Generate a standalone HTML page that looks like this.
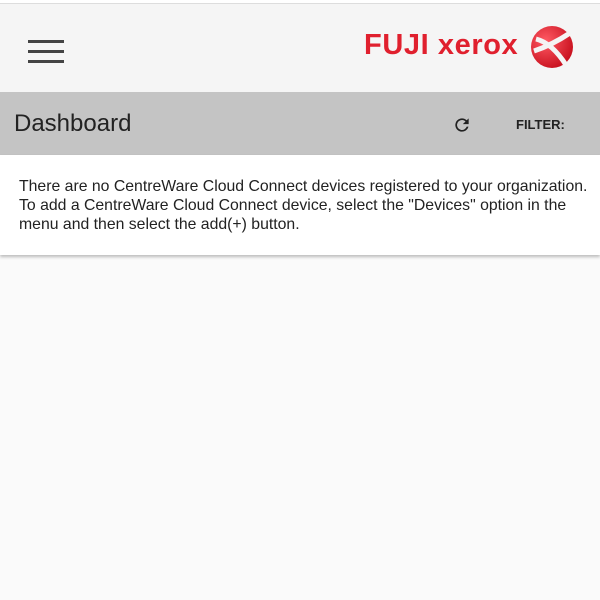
<!DOCTYPE html><html><head><style>
body{margin:0;width:600px;height:600px;background:#fafafa;font-family:"Liberation Sans",sans-serif;overflow:hidden;position:relative}
.top{position:absolute;left:0;top:0;width:600px;height:92px;background:#f5f5f5;border-top:3px solid #fff;box-sizing:border-box}
.top:before{content:"";position:absolute;left:0;top:0;width:600px;height:1px;background:#ddd}
.hb{position:absolute;left:28px;width:36px;height:3px;background:#444}
.bar{position:absolute;left:0;top:92px;width:600px;height:63px;background:#c4c4c4}
.card{position:absolute;left:0;top:155px;width:600px;height:100px;background:#fff;box-shadow:0 2px 3px rgba(0,0,0,.25)}
</style></head><body>
<div class="top">
<div class="hb" style="top:37px"></div><div class="hb" style="top:47px"></div><div class="hb" style="top:57px"></div>
<div style="position:absolute;left:364px;top:26px;color:#e0202e;font-weight:bold;font-size:29px;letter-spacing:0.6px">FUJI xerox</div>
<svg style="position:absolute;left:530px;top:22px" width="44" height="44" viewBox="0 0 44 44">
<defs><radialGradient id="g" cx="0.35" cy="0.35" r="0.7"><stop offset="0" stop-color="#ff5a64"/><stop offset="1" stop-color="#c8101e"/></radialGradient></defs>
<circle cx="22" cy="22" r="21" fill="url(#g)"/>
<path d="M6 14 Q22 18 36 40 M4 26 Q22 20 40 8" stroke="#f4f4f4" stroke-width="5" fill="none"/>
</svg>
</div>
<div class="bar">
<div style="position:absolute;left:14px;top:18px;font-size:24px;color:#222">Dashboard</div>
<svg style="position:fixed;left:452px;top:115px" width="20" height="20" viewBox="0 0 24 24"><path d="M17.65 6.35A7.96 7.96 0 0 0 12 4a8 8 0 1 0 7.73 10h-2.08A6 6 0 1 1 12 6c1.66 0 3.14.69 4.22 1.78L13 11h7V4l-2.35 2.35z" fill="#222"/></svg>
<div style="position:absolute;left:516px;top:25px;font-size:13px;font-weight:bold;color:#222">FILTER:</div>
</div>
<div class="card"><div style="position:absolute;left:19px;top:22px;width:575px;font-size:15.8px;line-height:19px;color:#222">There are no CentreWare Cloud Connect devices registered to your organization. To add a CentreWare Cloud Connect device, select the "Devices" option in the menu and then select the add(+) button.</div></div>
</body></html>
